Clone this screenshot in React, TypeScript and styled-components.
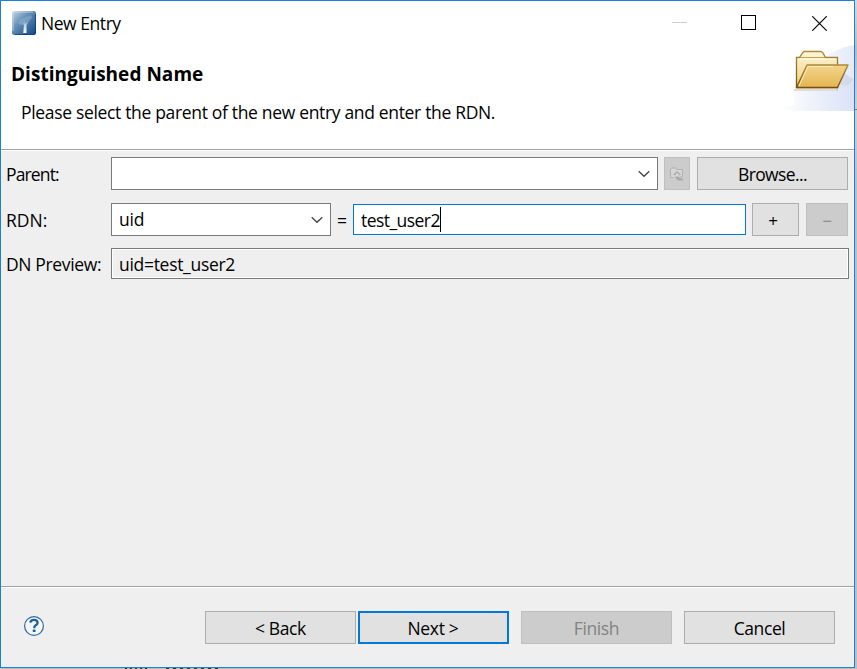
import React from 'react';
import styled, { createGlobalStyle } from 'styled-components';

const Global = createGlobalStyle`
  * { box-sizing: border-box; }
  html, body { margin: 0; padding: 0; overflow: hidden; }
  body { background: #c3c4c6; font-family: "Open Sans", "Noto Sans", sans-serif; font-size: 17.5px; color: #000; }
`;

const Desktop = styled.div`
  width: 857px;
  height: 669px;
  padding: 0 2px 1px 0;
  background:
    linear-gradient(#777, #777) 855px 109px / 2px 1px no-repeat,
    repeating-linear-gradient(90deg, #333 0 2px, #bbb 2px 5px) 125px 668px / 22px 1px no-repeat,
    repeating-linear-gradient(90deg, #333 0 3px, #bbb 3px 7px) 166px 668px / 54px 1px no-repeat,
    linear-gradient(180deg, #d9d9da 0, #b9babc 50px, #cfcfd0 110px, #bdbec0 180px, #bdbec0 100%);
`;

const Dialog = styled.div`
  width: 855px;
  height: 668px;
  display: flex;
  flex-direction: column;
  border: 1px solid #1b81d6;
  background: #efefef;
`;

const Label = styled.span<{ $ls?: number; $bold?: boolean; $dy?: number; $size?: number }>`
  display: block;
  white-space: pre;
  line-height: 24px;
  font-size: ${(p) => p.$size ?? 17.5}px;
  font-weight: ${(p) => (p.$bold ? 700 : 400)};
  letter-spacing: ${(p) => p.$ls ?? 0}px;
  margin-top: ${(p) => p.$dy ?? 0}px;
`;

const Header = styled.header`
  height: 150px;
  background: #fff;
  border-bottom: 1px solid #fff;
  box-shadow: inset 0 -1px 0 #a0a0a0;
  display: flex;
  flex-direction: column;
`;

const TitleBar = styled.div`
  height: 44px;
  display: flex;
  align-items: center;
  padding: 0 27px 0 11px;
  gap: 5px;
`;

const WindowControls = styled.div`
  margin-left: auto;
  display: flex;
  align-items: center;
  gap: 54px;
  & > svg { margin-bottom: 1px; }
  & > svg:last-child { margin-left: 2px; margin-bottom: 0; }
`;

const Banner = styled.div`
  height: 105px;
  display: flex;
  justify-content: space-between;
`;

const Headings = styled.div`
  padding: 17px 0 0 10px;
`;

const Description = styled.div`
  padding: 14px 0 0 10px;
`;

const Form = styled.main`
  flex: 1;
  padding: 6px 5px 0 5px;
`;

const Row = styled.div<{ $gap: number }>`
  display: grid;
  grid-template-columns: 105px 1fr;
  align-items: center;
  margin-bottom: ${(p) => p.$gap}px;
`;

const Fields = styled.div`
  display: flex;
  align-items: center;
`;

const Combo = styled.div<{ $w: number }>`
  width: ${(p) => p.$w}px;
  height: 33px;
  display: flex;
  align-items: center;
  justify-content: space-between;
  padding: 0 7px;
  background: #fff;
  border: 1px solid #7a7a7a;
`;

const TextField = styled.div`
  width: 393px;
  height: 31px;
  display: flex;
  align-items: center;
  padding: 0 7px;
  background: #fff;
  border: 1px solid #0078d7;
`;

const Caret = styled.span`
  width: 1px;
  height: 25px;
  background: #000;
`;

const Preview = styled.div`
  width: 738px;
  height: 31px;
  display: flex;
  align-items: center;
  padding: 0 7px;
  border: 1px solid #7a7a7a;
  box-shadow: inset 0 0 0 1px #fff;
`;

const Equals = styled.div`
  width: 22px;
  display: flex;
  justify-content: center;
`;

const Button = styled.button<{ $w: number; $ml?: number; $pr?: number; $primary?: boolean }>`
  width: ${(p) => p.$w}px;
  height: 33px;
  margin: 0 0 0 ${(p) => p.$ml ?? 0}px;
  padding: 0 ${(p) => p.$pr ?? 0}px 0 0;
  display: flex;
  align-items: center;
  justify-content: center;
  font-family: inherit;
  color: #000;
  background: #e1e1e1;
  border: ${(p) => (p.$primary ? '2px solid #0078d7' : '1px solid #adadad')};
  &:disabled { background: #ccc; border-color: #bfbfbf; color: #838383; }
`;

const Footer = styled.footer`
  height: 81px;
  display: flex;
  align-items: center;
  padding: 0 19px 0 23px;
  border-top: 1px solid #a0a0a0;
  box-shadow: inset 0 1px 0 #fff;
`;

const HelpSlot = styled.div`
  display: flex;
  padding-bottom: 2px;
`;

const Actions = styled.div`
  display: flex;
  margin-left: auto;
`;

const AppIcon = () => (
  <svg width="24" height="24" viewBox="0 0 24 24">
    <defs>
      <linearGradient id="app" x1="0" y1="0" x2="1" y2="1">
        <stop offset="0" stopColor="#c3d8e6" />
        <stop offset=".4" stopColor="#668fb5" />
        <stop offset="1" stopColor="#0c4585" />
      </linearGradient>
      <linearGradient id="trunk" x1="0" y1="0" x2="0" y2="1">
        <stop offset="0" stopColor="#8fb3d0" />
        <stop offset="1" stopColor="#fff" />
      </linearGradient>
    </defs>
    <rect width="24" height="24" rx="2.5" fill="url(#app)" />
    <path d="M1 20V2.5Q1 1 2.5 1H21" fill="none" stroke="#dbe8ef" strokeWidth="1" opacity=".7" />
    <path d="M23.5 3v18q0 2.500-2.500 2.500H3" fill="none" stroke="#073a78" opacity=".7" />
    <path d="M6 12l3-4 5-2 5-2 1 3-3 3-3 3-5 1z" fill="#a5c3da" opacity=".4" />
    <path d="M11.300 22l.6-8-2-3 2.400 2 .3-4 .9 4 3.500-3.500-2.500 4.500v8z" fill="url(#trunk)" />
  </svg>
);

const Minimize = () => (
  <svg width="15" height="15" shapeRendering="crispEdges"><path d="M0 7.500h15" stroke="#ccc" /></svg>
);
const Maximize = () => (
  <svg width="15" height="15" shapeRendering="crispEdges"><rect x=".5" y=".5" width="14" height="14" fill="none" stroke="#000" /></svg>
);
const Close = () => (
  <svg width="15" height="15"><path d="M.3.3l14.400 14.400M14.700.3L.3 14.700" stroke="#000" strokeWidth="1.15" /></svg>
);
const Chevron = () => (
  <svg width="12" height="8"><path d="M.7 1.200L6 6.300l5.300-5.100" fill="none" stroke="#444" strokeWidth="1.3" /></svg>
);

const FolderBanner = () => (
  <svg width="72" height="67" viewBox="0 0 72 67">
    <defs>
      <linearGradient id="wash" x1="0" x2="1">
        <stop offset="0" stopColor="#fff" />
        <stop offset=".35" stopColor="#f1f4fc" />
        <stop offset="1" stopColor="#d9e2f6" />
      </linearGradient>
      <linearGradient id="swell" x1="0" x2="1">
        <stop offset="0" stopColor="#f4f7fd" />
        <stop offset="1" stopColor="#e3eaf8" />
      </linearGradient>
      <linearGradient id="back" x1="0" y1="0" x2="0" y2="1">
        <stop offset="0" stopColor="#fdf6da" />
        <stop offset="1" stopColor="#efcf79" />
      </linearGradient>
      <linearGradient id="front" x1="0" y1="0" x2="0" y2="1">
        <stop offset="0" stopColor="#f4d58d" />
        <stop offset="1" stopColor="#e4b550" />
      </linearGradient>
      <linearGradient id="edge" x1="0" y1="0" x2="0" y2="1">
        <stop offset="0" stopColor="#b08a35" />
        <stop offset="1" stopColor="#77500f" />
      </linearGradient>
    </defs>
    <path d="M40 14Q54 3 72 0v40H40z" fill="url(#swell)" />
    <path d="M0 66v-4l12-2V46h42q10-5 18-12v32z" fill="url(#wash)" />
    <path d="M54 45l8-17q7 5 10 6-8 9-18 11z" fill="#b9bfd8" opacity=".4" />
    <path d="M12 45h44" stroke="#a78b6a" strokeWidth="2" opacity=".3" />
    <path d="M14.500 42.500v-30h3l3-4.500 1.500-1.500h17l2 1.500 2.500 4.500h12v30z" fill="url(#back)" stroke="url(#edge)" strokeWidth="1.3" />
    <path d="M18 12.500h25" stroke="#c4a04c" strokeWidth="1" />
    <path d="M16 14h38" stroke="#fffbe8" strokeWidth="1" />
    <path d="M14.500 42.500l10.500-22.500h41l-10.500 22.500z" fill="url(#front)" stroke="url(#edge)" strokeWidth="1.4" strokeLinejoin="round" />
    <path d="M17 41l9-19.500h25" fill="none" stroke="#fbeec4" strokeWidth="1" />
  </svg>
);

const FolderUp = () => (
  <svg width="14" height="14" viewBox="0 0 14 14">
    <path d="M.5 10.500V2.500L1.500 1h4l1 1.500h6v7.500H10M.5 10.500h3" fill="#d6d6d6" stroke="#b1b1b1" />
    <path d="M7 4l4.200 4H9V10.500l4 1.500v1.500H8L5.500 11V8H2.800z" fill="#aaa" />
    <path d="M7 5.700l1.500 1.800v2H5.800v-2z" fill="#dedede" />
  </svg>
);

const Help = () => (
  <svg width="20" height="20" viewBox=".5 .5 20 20">
    <circle cx="10.500" cy="10.500" r="9.400" fill="#f3f7fa" stroke="#33699e" strokeWidth="1.200" />
    <path d="M6.900 7.100Q7 4.400 10.500 4.400T14.100 7.200Q14.100 8.700 12.200 9.800 10.700 10.700 10.700 12.700" fill="none" stroke="#205f9d" strokeWidth="2.300" />
    <rect x="9.300" y="14.100" width="2.700" height="2.500" rx=".7" fill="#205f9d" />
  </svg>
);

export default function App() {
  return (
    <Desktop>
      <Global />
      <Dialog>
        <Header>
          <TitleBar>
            <AppIcon />
            <Label $ls={-0.45}>New Entry</Label>
            <WindowControls>
              <Minimize />
              <Maximize />
              <Close />
            </WindowControls>
          </TitleBar>
          <Banner>
            <Headings>
              <Label $bold $size={19} $ls={0.03}>Distinguished Name</Label>
              <Description>
                <Label $ls={-0.33}>Please select the parent of the new entry and enter the RDN.</Label>
              </Description>
            </Headings>
            <FolderBanner />
          </Banner>
        </Header>
        <Form>
          <Row $gap={13}>
            <Label $ls={-0.85}>Parent:</Label>
            <Fields>
              <Combo $w={547}><span /><Chevron /></Combo>
              <Button $w={26} $ml={6} disabled><FolderUp /></Button>
              <Button $w={151} $ml={7}><Label $ls={-0.6}>Browse...</Label></Button>
            </Fields>
          </Row>
          <Row $gap={12}>
            <Label>RDN:</Label>
            <Fields>
              <Combo $w={220}><Label $dy={-2} $ls={-0.2}>uid</Label><Chevron /></Combo>
              <Equals><Label>=</Label></Equals>
              <TextField><Label $ls={-0.55}>test_user2</Label><Caret /></TextField>
              <Button $w={47} $ml={6} $pr={5}><Label $size={17} $dy={2}>+</Label></Button>
              <Button $w={42} $ml={7} disabled><Label $size={17} $dy={2}>−</Label></Button>
            </Fields>
          </Row>
          <Row $gap={0}>
            <Label $ls={-0.35}>DN Preview:</Label>
            <Preview><Label $ls={-0.3}>uid=test_user2</Label></Preview>
          </Row>
        </Form>
        <Footer>
          <HelpSlot><Help /></HelpSlot>
          <Actions>
            <Button $w={151}><Label $dy={1} $ls={-0.4}>{'< Back'}</Label></Button>
            <Button $w={151} $ml={2} $pr={1} $primary><Label $dy={1} $ls={-0.3}>{'Next >'}</Label></Button>
            <Button $w={151} $ml={12} disabled><Label $dy={1} $ls={-0.4}>Finish</Label></Button>
            <Button $w={151} $ml={12}><Label $dy={1} $ls={-0.4}>Cancel</Label></Button>
          </Actions>
        </Footer>
      </Dialog>
    </Desktop>
  );
}
